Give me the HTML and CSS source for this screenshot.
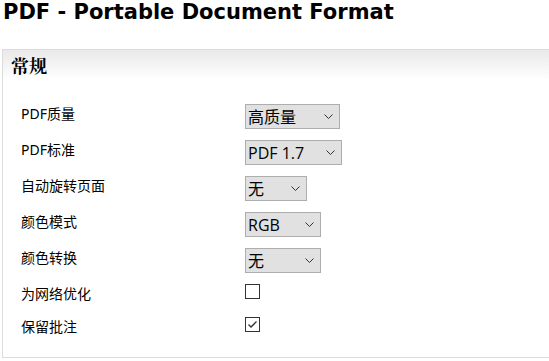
FILE: index.html
```html
<!DOCTYPE html>
<html lang="zh-CN">
<head>
  <meta charset="UTF-8" />
  <meta name="viewport" content="width=device-width, initial-scale=1" />
  <title>PDF - Portable Document Format</title>
  <link rel="stylesheet" href="styles.css">
</head>
<body>

  <h1 class="page-title">PDF - Portable Document Format</h1>

  <div class="section">
    <div class="section-head">常规</div>

    <div class="options">
      <div class="row">
        <label for="quality">PDF质量</label>
        <select id="quality" class="sel sel-quality">
          <option>高质量</option>
          <option>中等</option>
          <option>低质量</option>
        </select>
      </div>

      <div class="row">
        <label for="standard">PDF标准</label>
        <select id="standard" class="sel sel-standard">
          <option>PDF 1.7</option>
          <option>PDF/A-1b</option>
        </select>
      </div>

      <div class="row">
        <label for="rotate">自动旋转页面</label>
        <select id="rotate" class="sel sel-rotate">
          <option>无</option>
          <option>全部</option>
        </select>
      </div>

      <div class="row">
        <label for="colormode">颜色模式</label>
        <select id="colormode" class="sel sel-wide">
          <option>RGB</option>
          <option>CMYK</option>
        </select>
      </div>

      <div class="row">
        <label for="convert">颜色转换</label>
        <select id="convert" class="sel sel-wide">
          <option>无</option>
          <option>灰度</option>
        </select>
      </div>

      <div class="row row-check">
        <label for="web">为网络优化</label>
        <input type="checkbox" id="web" class="check">
      </div>

      <div class="row row-check">
        <label for="notes">保留批注</label>
        <input type="checkbox" id="notes" class="check" checked>
      </div>
    </div>
  </div>

  <div class="section-next"></div>

</body>
</html>
```

FILE: styles.css
```css
body {
  margin: 0;
  padding: 0 0 0 2px;
  background: #fff;
  color: #000;
  overflow: hidden;
}

.page-title {
  margin: 0;
  padding: 0 0 0 1px;
  height: 49px;
  box-sizing: border-box;
  font-family: "DejaVu Sans", Verdana, sans-serif;
  font-size: 21px;
  line-height: 25px;
  font-weight: bold;
}

.section {
  border: 1px solid #dcdcdc;
  border-right: none;
  padding-bottom: 12px;
}

.section-head {
  height: 30px;
  padding-left: 8px;
  background: linear-gradient(to bottom, #e9e9e9, #ffffff);
  font-family: "Noto Serif CJK SC", "Noto Sans CJK SC", serif;
  font-size: 18px;
  font-weight: bold;
  line-height: 30px;
}

.options {
  padding: 19px 0 0 18px;
  font-family: "Noto Sans", "Noto Sans CJK SC", sans-serif;
}

.row {
  display: grid;
  grid-template-columns: 224px auto;
  align-items: start;
  padding: 5px 0 6px;
}

.row label {
  font-size: 14px;
  line-height: 20px;
  color: #000;
}

.row-check {
  padding: 5px 0 8px;
}

.sel {
  -webkit-appearance: none;
  appearance: none;
  height: 25px;
  box-sizing: border-box;
  margin: 0;
  padding: 0 0 0 2px;
  border: 1px solid #adadad;
  border-radius: 0;
  background-color: #e1e1e1;
  background-image: url("data:image/svg+xml,%3Csvg xmlns='http://www.w3.org/2000/svg' width='9' height='6' viewBox='0 0 9 6'%3E%3Cpath d='M0.5 0.5 L4.5 4.5 L8.5 0.5' fill='none' stroke='%23333' stroke-width='1'/%3E%3C/svg%3E");
  background-repeat: no-repeat;
  background-position: right 6px center;
  font-family: "Open Sans", "Noto Sans CJK SC", sans-serif;
  font-size: 16px;
  color: #000;
}

.sel-quality { width: 95px; }
.sel-standard { width: 97px; }
.sel-rotate { width: 62px; }
.sel-wide { width: 76px; }

.check {
  -webkit-appearance: none;
  appearance: none;
  width: 15px;
  height: 15px;
  margin: 0;
  border: 1px solid #333;
  border-radius: 0;
  background: #fff;
}

.check:checked {
  background-image: url("data:image/svg+xml,%3Csvg xmlns='http://www.w3.org/2000/svg' width='13' height='13' viewBox='0 0 13 13'%3E%3Cpath d='M2.5 6.5 L5 9 L10.5 3.5' fill='none' stroke='%23333' stroke-width='1.3'/%3E%3C/svg%3E");
  background-repeat: no-repeat;
  background-position: center;
}

.section-next {
  margin: 11px 0 0 -2px;
  border-top: 1px solid #d0d0d0;
}
```
